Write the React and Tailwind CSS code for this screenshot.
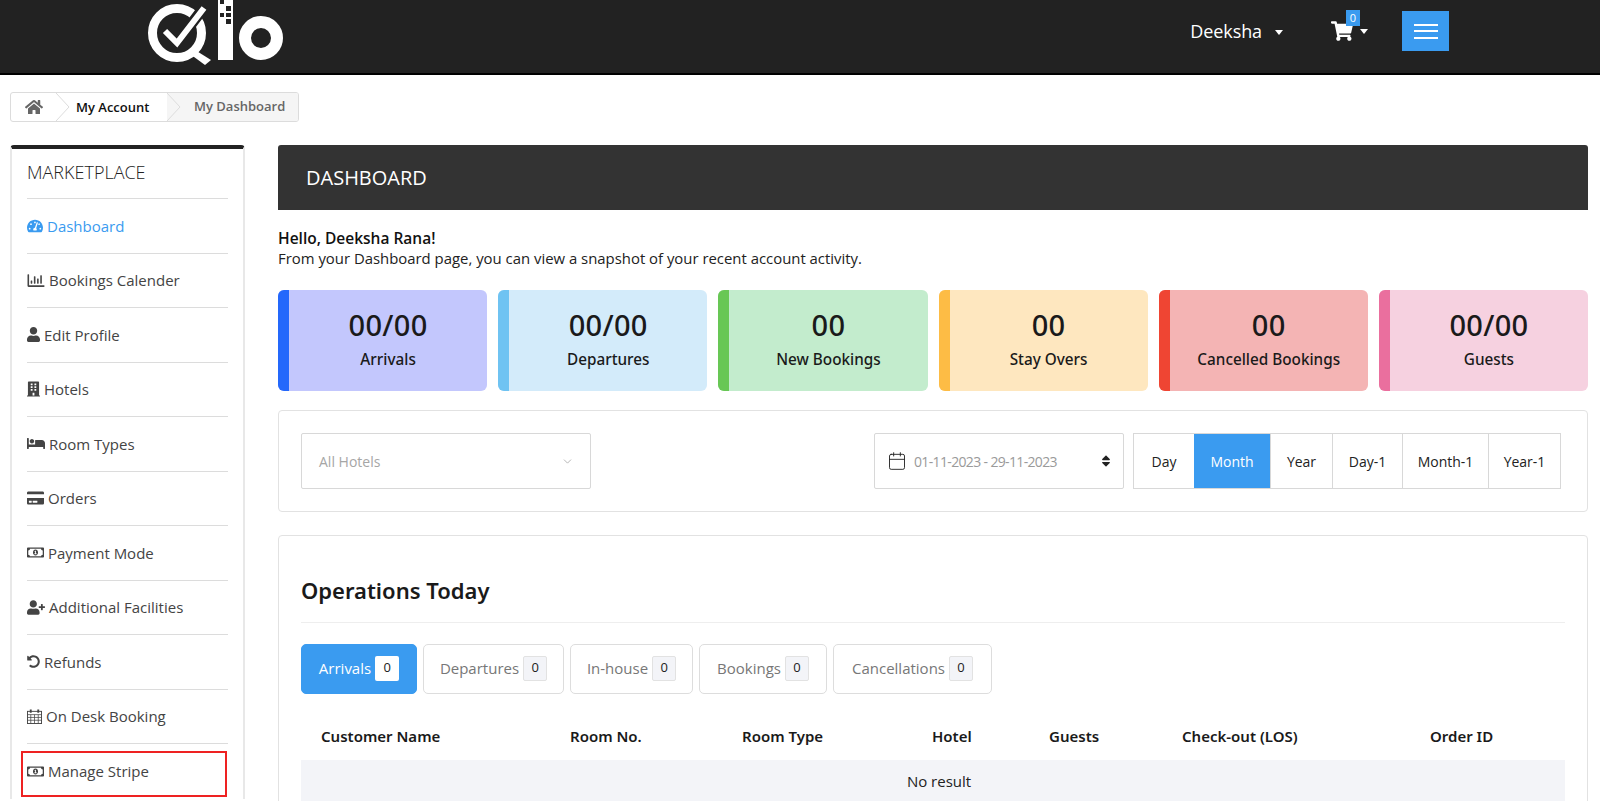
import React from "react";
import { FaHome, FaShoppingCart, FaTachometerAlt, FaRegChartBar, FaUser, FaBuilding, FaBed, FaCreditCard, FaRegMoneyBillAlt, FaUserPlus, FaUndoAlt, FaSort } from "react-icons/fa";
import { ChevronDown, Calendar } from "lucide-react";

function Logo() {
  return (
    <svg width="140" height="66" viewBox="146 0 140 66" className="block">
      <circle cx="177" cy="33" r="24.5" fill="none" stroke="#fff" strokeWidth="9" />
      <path d="M195 50 L211 60 L205 65 L190 54 Z" fill="#fff" />
      <path d="M165 31 L177 43 L205 6" fill="none" stroke="#222" strokeWidth="11" />
      <path d="M165 31 L177 43 L204 8" fill="none" stroke="#fff" strokeWidth="6" />
      <path d="M218 0 H233 V60 H218 Z" fill="#fff" />
      <path d="M220 0 h4 v4 h-4 Z M226 6 h5 v5 h-5 Z M220 13 h4 v4 h-4 Z M226 13 h5 v4 h-5 Z M226 19 h5 v5 h-5 Z" fill="#222" />
      <circle cx="261" cy="38" r="16" fill="none" stroke="#fff" strokeWidth="12" />
    </svg>
  );
}

function Caret({ className }) {
  return <span className={"block w-0 h-0 border-x-[4.5px] border-x-transparent border-t-[5px] border-t-white " + className} />;
}

function Crumb() {
  return (
    <svg width="14" height="28" viewBox="0 0 14 28" className="block shrink-0">
      <path d="M0 0 L13 14 L0 28" fill="none" stroke="#dcdcdc" strokeWidth="1" />
    </svg>
  );
}

function GridCalendar({ className }) {
  return (
    <svg viewBox="0 0 16 16" className={className} fill="none" stroke="currentColor" strokeWidth="1">
      <rect x="0.5" y="2.5" width="15" height="13" />
      <path d="M0.5 6 H15.5 M0.5 9 H15.5 M0.5 12 H15.5 M4 6 V15.5 M8 6 V15.5 M12 6 V15.5" strokeWidth="0.8" />
      <path d="M4 0.5 V4 M12 0.5 V4" strokeWidth="2" />
    </svg>
  );
}

const menu = [
  { t: "Dashboard", I: FaTachometerAlt, active: true, s: "w-[16px] h-[16px]" },
  { t: "Bookings Calender", I: FaRegChartBar, s: "w-[18px] h-[17px]" },
  { t: "Edit Profile", I: FaUser, s: "w-[13px] h-[15px]" },
  { t: "Hotels", I: FaBuilding, s: "w-[13px] h-[16px]" },
  { t: "Room Types", I: FaBed, s: "w-[18px] h-[17px]" },
  { t: "Orders", I: FaCreditCard, s: "w-[17px] h-[16px]" },
  { t: "Payment Mode", I: FaRegMoneyBillAlt, s: "w-[17px] h-[15px]" },
  { t: "Additional Facilities", I: FaUserPlus, s: "w-[18px] h-[15px]" },
  { t: "Refunds", I: FaUndoAlt, s: "w-[13px] h-[13px]" },
  { t: "On Desk Booking", I: GridCalendar, s: "w-[15px] h-[15px]" },
  { t: "Manage Stripe", I: FaRegMoneyBillAlt, s: "w-[17px] h-[15px]", boxed: true },
];

const cards = [
  { n: "00/00", l: "Arrivals", bg: "bg-[#c3c7fd]", bar: "bg-[#2468fb]" },
  { n: "00/00", l: "Departures", bg: "bg-[#d3ebfa]", bar: "bg-[#6fc3f2]" },
  { n: "00", l: "New Bookings", bg: "bg-[#c3eccd]", bar: "bg-[#68c755]" },
  { n: "00", l: "Stay Overs", bg: "bg-[#fee7bf]", bar: "bg-[#fdbc45]" },
  { n: "00", l: "Cancelled Bookings", bg: "bg-[#f4b4b4]", bar: "bg-[#ef4533]" },
  { n: "00/00", l: "Guests", bg: "bg-[#f6d1e0]", bar: "bg-[#ea6f9e]" },
];

const ranges = [
  { t: "Day", w: "w-[60px]" },
  { t: "Month", w: "w-[76px]", on: true },
  { t: "Year", w: "w-[62px]" },
  { t: "Day-1", w: "w-[70px]" },
  { t: "Month-1", w: "w-[86px]" },
  { t: "Year-1", w: "w-[72px]" },
];

const tabs = [
  { t: "Arrivals", w: "w-[116px]", on: true },
  { t: "Departures", w: "w-[141px]" },
  { t: "In-house", w: "w-[123px]" },
  { t: "Bookings", w: "w-[128px]" },
  { t: "Cancellations", w: "w-[159px]" },
];

const cols = [
  { t: "Customer Name", w: "w-[249px]" },
  { t: "Room No.", w: "w-[172px]" },
  { t: "Room Type", w: "w-[190px]" },
  { t: "Hotel", w: "w-[117px]" },
  { t: "Guests", w: "w-[133px]" },
  { t: "Check-out (LOS)", w: "w-[248px]" },
  { t: "Order ID", w: "w-[100px]" },
];

export default function App() {
  return (
    <div className="h-[801px] overflow-hidden bg-white font-['Open_Sans','Noto_Sans',sans-serif] text-[#222]">
      <header className="h-[75px] bg-[#222222] border-b-2 border-black flex items-start relative">
        <div className="ml-[146px] mt-0"><Logo /></div>
        <div className="ml-auto flex items-start">
          <span className="mt-[18px] text-[18px] leading-[26px] tracking-[-0.1px] text-white">Deeksha</span>
          <Caret className="ml-[13px] mt-[30px]" />
          <div className="relative ml-[48px] mt-[20px] w-[22px] text-white">
            <FaShoppingCart size={22} />
            <span className="absolute left-[15px] top-[-10px] w-[14px] h-[16px] bg-[#3a9bf0] text-white text-[11px] leading-[16px] text-center">0</span>
          </div>
          <Caret className="ml-[7px] mt-[29px]" />
          <div className="ml-[34px] mr-[151px] mt-[11px] w-[47px] h-[40px] bg-[#3a9bf0] flex flex-col items-center justify-center gap-[4.5px]">
            <span className="block w-[24px] h-[2px] bg-white" />
            <span className="block w-[24px] h-[2px] bg-white" />
            <span className="block w-[24px] h-[2px] bg-white" />
          </div>
        </div>
      </header>

      <nav className="ml-[10px] mt-[17px] w-[289px] h-[30px] border border-[#dcdcdc] rounded-[3px] flex items-center text-[13px] font-semibold overflow-hidden whitespace-nowrap">
        <div className="w-[45px] h-full flex items-center pl-[14px] text-[#666]"><FaHome size={18} /></div>
        <Crumb />
        <div className="w-[97px] pl-[6px] text-[#111] leading-[28px]">My Account</div>
        <div className="flex-1 h-full bg-[#f5f5f5] flex items-center">
          <Crumb />
          <span className="ml-[13px] text-[#666]">My Dashboard</span>
        </div>
      </nav>

      <div className="mt-[23px] ml-[10px] mr-[12px] flex items-start gap-[33px]">
        <aside className="w-[235px] shrink-0 bg-white border-x-2 border-[#e8e8e8] border-t-[4px] border-t-[#222] rounded-t-[4px] px-[15px]">
          <h2 className="h-[50px] pt-[10px] text-[18px] leading-[26px] font-light text-[#222] border-b border-[#dcdcdc]">MARKETPLACE</h2>
          <ul>
            {menu.map(({ t, I, active, boxed, s }, i) => (
              <li key={t} className={"relative h-[54.5px] flex items-center gap-[4px] text-[15px] " + (i < menu.length - 1 ? "border-b border-[#dcdcdc] " : "") + (active ? "text-[#3a9bf0]" : "text-[#444]")}>
                <I className={s + " shrink-0"} />
                <span>{t}</span>
                {boxed && <span className="absolute left-[-6px] top-[7px] w-[206px] h-[46px] border-2 border-[#ee2222]" />}
              </li>
            ))}
          </ul>
        </aside>

        <main className="flex-1 min-w-0">
          <div className="h-[65px] bg-[#333333] rounded-t-[3px] flex items-center pl-[28px] text-[20px] text-white">DASHBOARD</div>
          <p className="mt-[18px] text-[15.5px] leading-[20px] font-semibold text-[#111]">Hello, Deeksha Rana!</p>
          <p className="text-[14.9px] leading-[20px] text-[#222]">From your Dashboard page, you can view a snapshot of your recent account activity.</p>

          <div className="mt-[22px] grid grid-cols-6 gap-[11px]">
            {cards.map((c) => (
              <div key={c.l} className={"h-[101px] rounded-[6px] overflow-hidden flex " + c.bg}>
                <div className={"w-[11px] shrink-0 " + c.bar} />
                <div className="flex-1 flex flex-col items-center pt-[14px] font-['Noto_Sans',sans-serif] text-[#1a1a1a]">
                  <span className="text-[29px] leading-[42px] font-medium tracking-[0.3px]">{c.n}</span>
                  <span className="mt-[2px] text-[15.3px] leading-[22px] font-medium">{c.l}</span>
                </div>
              </div>
            ))}
          </div>

          <section className="mt-[19px] h-[102px] border border-[#e2e2e2] rounded-[4px] pt-[22px] pl-[22px] pr-[26px] flex items-start">
            <div className="w-[290px] h-[56px] border border-[#d8d8d8] rounded-[2px] flex items-center justify-between pl-[17px] pr-[16px] text-[14px] text-[#a6a6a6]">
              <span>All Hotels</span>
              <ChevronDown size={13} strokeWidth={1.5} />
            </div>
            <div className="ml-auto w-[250px] h-[56px] border border-[#d8d8d8] rounded-[2px] flex items-center pl-[12px] pr-[10px] text-[14px] text-[#9a9a9a]">
              <Calendar size={20} strokeWidth={1.1} className="text-[#222]" />
              <span className="ml-[7px] tracking-[-0.65px]">01-11-2023 - 29-11-2023</span>
              <FaSort size={14} className="ml-auto text-[#222]" />
            </div>
            <div className="ml-[9px] h-[56px] flex border border-[#d8d8d8] text-[14px] text-[#222]">
              {ranges.map((r, i) => (
                <div key={r.t} className={"flex items-center justify-center " + r.w + " " + (r.on ? "bg-[#3a9bf0] text-white " : "") + (i > 1 ? "border-l border-[#d8d8d8]" : "")}>{r.t}</div>
              ))}
            </div>
          </section>

          <section className="mt-[23px] border border-[#e2e2e2] rounded-[4px] px-[22px] h-[300px]">
            <h3 className="mt-[38px] h-[49px] pb-[14px] border-b border-[#eeeeee] font-['Noto_Sans',sans-serif] text-[22px] leading-[32px] font-semibold text-[#1a1a1a]">Operations Today</h3>
            <div className="mt-[21px] flex gap-[6px]">
              {tabs.map((b) => (
                <div key={b.t} className={"h-[50px] pb-[2px] rounded-[5px] border flex items-center justify-center gap-[4px] text-[15px] " + b.w + " " + (b.on ? "bg-[#3a9bf0] border-[#3a9bf0] text-white" : "border-[#dddddd] text-[#777]")}>
                  <span>{b.t}</span>
                  <span className={"w-[24px] h-[25px] rounded-[2px] flex items-center justify-center text-[13px] font-medium text-[#222] " + (b.on ? "bg-white" : "bg-[#f3f4f8] border border-[#e2e2e2]")}>0</span>
                </div>
              ))}
            </div>
            <div className="mt-[19px] flex h-[47px] items-center pl-[20px] font-['Noto_Sans',sans-serif] text-[15px] font-semibold text-[#1a1a1a]">
              {cols.map((c) => (
                <span key={c.t} className={"shrink-0 " + c.w}>{c.t}</span>
              ))}
            </div>
            <div className="h-[42px] bg-[#f3f4f8] flex items-center justify-center pl-[12px] text-[15px] text-[#222]">No result</div>
          </section>
        </main>
      </div>
    </div>
  );
}
